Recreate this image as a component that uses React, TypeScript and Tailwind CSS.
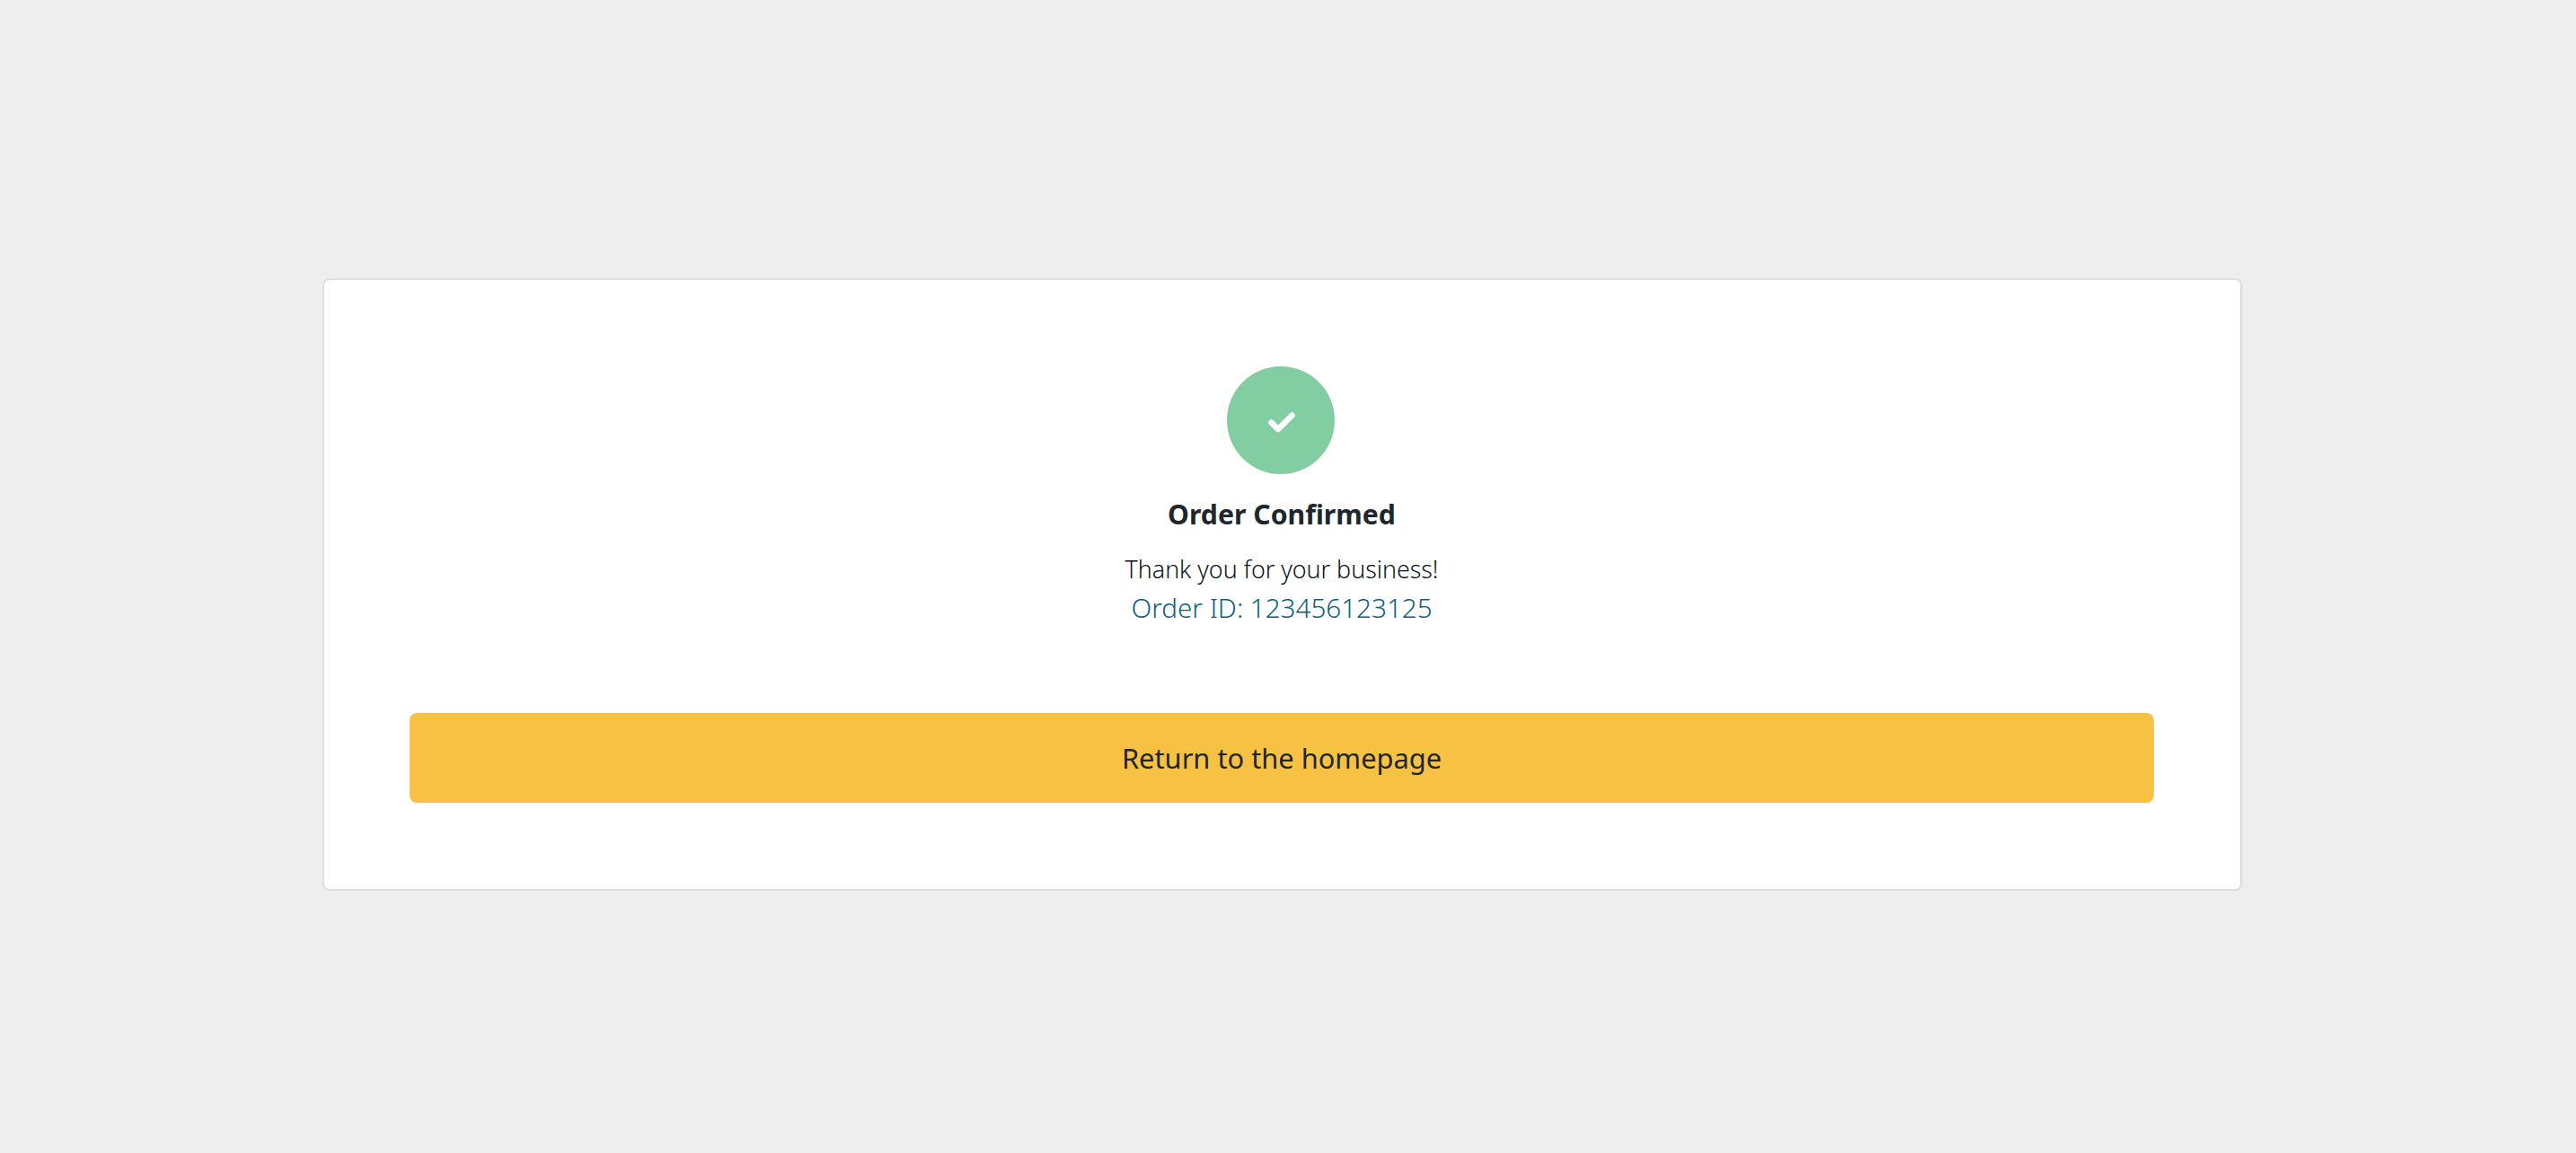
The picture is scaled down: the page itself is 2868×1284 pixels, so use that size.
export default function App() {
  return (
    <div className="min-h-screen bg-[#eeeeee] pl-[359px] pr-[371px] pt-[310px] font-['Noto_Sans',sans-serif]">
      <div className="flex h-[682px] flex-col items-center rounded-[8px] border-2 border-r-[3px] border-[#e0e0e2] bg-white pl-[95px] pr-[96px] pt-[96px]">
        <div className="mr-[2px] flex h-[120px] w-[120px] items-center justify-center rounded-full bg-[#82cea2]">
          <svg width="30" height="23" viewBox="0 0 30 23" fill="none" className="mt-[4px] ml-[2px]">
            <path d="M3.5 11.5L11 19L26.5 3.5" stroke="white" strokeWidth="6.5" strokeLinecap="round" strokeLinejoin="round" />
          </svg>
        </div>
        <h1 className="mt-[23px] text-[30.2px] leading-[44px] font-bold text-[#20262d]">Order Confirmed</h1>
        <p className="mt-[17px] text-[26.8px] leading-[44px] font-light text-[#0f1419]">Thank you for your business!</p>
        <p className="-mt-[1px] text-[29.6px] leading-[44px] font-light text-[#0f5f7c]">Order ID: 123456123125</p>
        <button className="mt-[95px] h-[100px] w-full rounded-[8px] bg-[#f7c144] text-[30.8px] text-[#20262d]">
          Return to the homepage
        </button>
      </div>
    </div>
  );
}
